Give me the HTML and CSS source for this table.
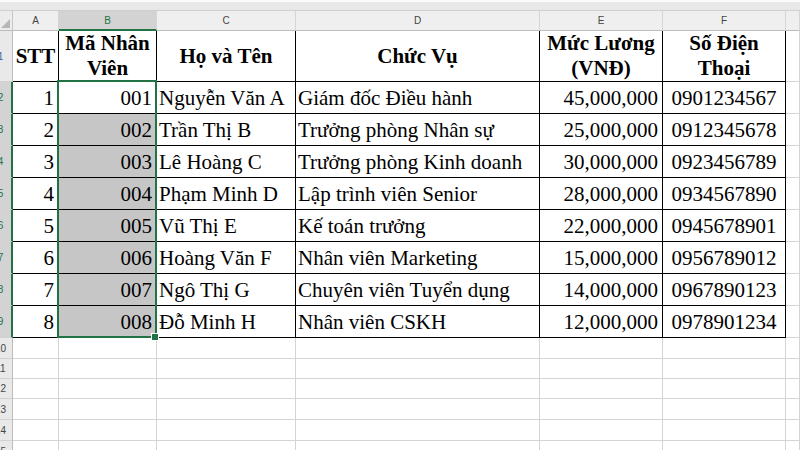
FILE: index.html
```html
<!DOCTYPE html>
<html lang="vi">
<head>
<meta charset="utf-8">
<title>Danh sách nhân viên</title>
<link rel="stylesheet" href="styles.css">
</head>
<body>
<div class="sheet">
  <div class="strip"></div>

  <div class="corner"><svg width="9" height="9" viewBox="0 0 9 9"><polygon points="9,0 9,9 0,9" fill="#b7b7b7"/></svg></div>
  <div class="col">A</div>
  <div class="col sel">B</div>
  <div class="col">C</div>
  <div class="col">D</div>
  <div class="col">E</div>
  <div class="col">F</div>
  <div class="col"></div>

  <div class="rh r1"><span>1</span></div>
  <div class="t h">STT</div>
  <div class="t h">Mã Nhân<br>Viên</div>
  <div class="t h">Họ và Tên</div>
  <div class="t h">Chức Vụ</div>
  <div class="t h">Mức Lương<br>(VNĐ)</div>
  <div class="t h">Số Điện<br>Thoại</div>
  <div class="c"></div>

  <div class="rh sel"><span>2</span></div>
  <div class="t r">1</div>
  <div class="t r">001</div>
  <div class="t l">Nguyễn Văn A</div>
  <div class="t l">Giám đốc Điều hành</div>
  <div class="t r">45,000,000</div>
  <div class="t m">0901234567</div>
  <div class="c"></div>

  <div class="rh sel"><span>3</span></div>
  <div class="t r">2</div>
  <div class="t r g">002</div>
  <div class="t l">Trần Thị B</div>
  <div class="t l">Trưởng phòng Nhân sự</div>
  <div class="t r">25,000,000</div>
  <div class="t m">0912345678</div>
  <div class="c"></div>

  <div class="rh sel"><span>4</span></div>
  <div class="t r">3</div>
  <div class="t r g">003</div>
  <div class="t l">Lê Hoàng C</div>
  <div class="t l">Trưởng phòng Kinh doanh</div>
  <div class="t r">30,000,000</div>
  <div class="t m">0923456789</div>
  <div class="c"></div>

  <div class="rh sel"><span>5</span></div>
  <div class="t r">4</div>
  <div class="t r g">004</div>
  <div class="t l">Phạm Minh D</div>
  <div class="t l">Lập trình viên Senior</div>
  <div class="t r">28,000,000</div>
  <div class="t m">0934567890</div>
  <div class="c"></div>

  <div class="rh sel"><span>6</span></div>
  <div class="t r">5</div>
  <div class="t r g">005</div>
  <div class="t l">Vũ Thị E</div>
  <div class="t l">Kế toán trưởng</div>
  <div class="t r">22,000,000</div>
  <div class="t m">0945678901</div>
  <div class="c"></div>

  <div class="rh sel"><span>7</span></div>
  <div class="t r">6</div>
  <div class="t r g">006</div>
  <div class="t l">Hoàng Văn F</div>
  <div class="t l">Nhân viên Marketing</div>
  <div class="t r">15,000,000</div>
  <div class="t m">0956789012</div>
  <div class="c"></div>

  <div class="rh sel"><span>8</span></div>
  <div class="t r">7</div>
  <div class="t r g">007</div>
  <div class="t l">Ngô Thị G</div>
  <div class="t l">Chuyên viên Tuyển dụng</div>
  <div class="t r">14,000,000</div>
  <div class="t m">0967890123</div>
  <div class="c"></div>

  <div class="rh sel"><span>9</span></div>
  <div class="t r">8</div>
  <div class="t r g">008</div>
  <div class="t l">Đỗ Minh H</div>
  <div class="t l">Nhân viên CSKH</div>
  <div class="t r">12,000,000</div>
  <div class="t m">0978901234</div>
  <div class="c"></div>

  <div class="rh"><span>10</span></div>
  <div class="c"></div><div class="c"></div><div class="c"></div><div class="c"></div><div class="c"></div><div class="c"></div><div class="c"></div>
  <div class="rh"><span>11</span></div>
  <div class="c"></div><div class="c"></div><div class="c"></div><div class="c"></div><div class="c"></div><div class="c"></div><div class="c"></div>
  <div class="rh"><span>12</span></div>
  <div class="c"></div><div class="c"></div><div class="c"></div><div class="c"></div><div class="c"></div><div class="c"></div><div class="c"></div>
  <div class="rh"><span>13</span></div>
  <div class="c"></div><div class="c"></div><div class="c"></div><div class="c"></div><div class="c"></div><div class="c"></div><div class="c"></div>
  <div class="rh"><span>14</span></div>
  <div class="c"></div><div class="c"></div><div class="c"></div><div class="c"></div><div class="c"></div><div class="c"></div><div class="c"></div>
  <div class="rh"><span>15</span></div>
  <div class="c"></div><div class="c"></div><div class="c"></div><div class="c"></div><div class="c"></div><div class="c"></div><div class="c"></div>

  <div class="selbox"></div>
  <div class="handle"></div>
</div>
</body>
</html>
```
FILE: styles.css
```css
* { box-sizing: border-box; }
html, body { margin: 0; padding: 0; background: #fff; overflow: hidden; }
body { font-family: "Liberation Serif", "Times New Roman", serif; }

.sheet {
  position: relative;
  width: 800px;
  height: 450px;
  overflow: hidden;
  display: grid;
  grid-template-columns: 13px 46px 98px 139px 244px 123px 123px 1fr;
  grid-template-rows: 11px 20px 51px repeat(8, 32px) 21px 20px 20px 21px 21px 21px;
}

.strip {
  grid-column: 1 / -1;
  background: #e8e8e8;
  border-top: 2px solid #fafafa;
  border-bottom: 1px solid #cfcfcf;
}

.corner {
  background: #ececec;
  border-right: 1px solid #c6c6c6;
  border-bottom: 1px solid #bdbdbd;
  display: flex;
  align-items: flex-end;
  justify-content: flex-end;
  padding: 0 2px 2px 0;
}

.col {
  background: #efefef;
  border-right: 1px solid #d5d5d5;
  border-bottom: 1px solid #bdbdbd;
  font: 10px "Liberation Sans", Arial, sans-serif;
  color: #444;
  display: flex;
  align-items: center;
  justify-content: center;
}
.col.sel {
  background: #d3d3d3;
  color: #217346;
  border-bottom: 2px solid #217346;
}

.rh {
  background: #e9e9e9;
  border-right: 1px solid #bdbdbd;
  border-bottom: 1px solid #d2d2d2;
  overflow: hidden;
  display: flex;
  align-items: center;
  font: 10px "Liberation Sans", Arial, sans-serif;
  color: #444;
}
.rh span {
  flex: 0 0 27px;
  margin-left: -13px;
  text-align: center;
}
.rh.r1 { color: #3a64a8; }
.rh.sel {
  background: #d3d3d3;
  color: #217346;
  border-right: 2px solid #217346;
}

.c {
  border-right: 1px solid #d4d4d4;
  border-bottom: 1px solid #d4d4d4;
}

.t {
  border-right: 1px solid #000;
  border-bottom: 1px solid #000;
  font-size: 21px;
  color: #000;
  display: flex;
  align-items: center;
  white-space: nowrap;
  overflow: hidden;
  padding-top: 1px;
}
.t.h {
  font-weight: bold;
  justify-content: center;
  text-align: center;
  line-height: 25px;
  padding-top: 0;
}
.t.r { justify-content: flex-end; padding-right: 4px; }
.t.l { padding-left: 2px; }
.t.m { justify-content: center; }
.t.g { background: #c6c6c6; }

.selbox {
  position: absolute;
  left: 57px;
  top: 80px;
  width: 100px;
  height: 258px;
  border: 2px solid #217346;
  pointer-events: none;
}
.handle {
  position: absolute;
  left: 151px;
  top: 333px;
  width: 8px;
  height: 8px;
  background: #217346;
  border: 1px solid #fff;
}
```
